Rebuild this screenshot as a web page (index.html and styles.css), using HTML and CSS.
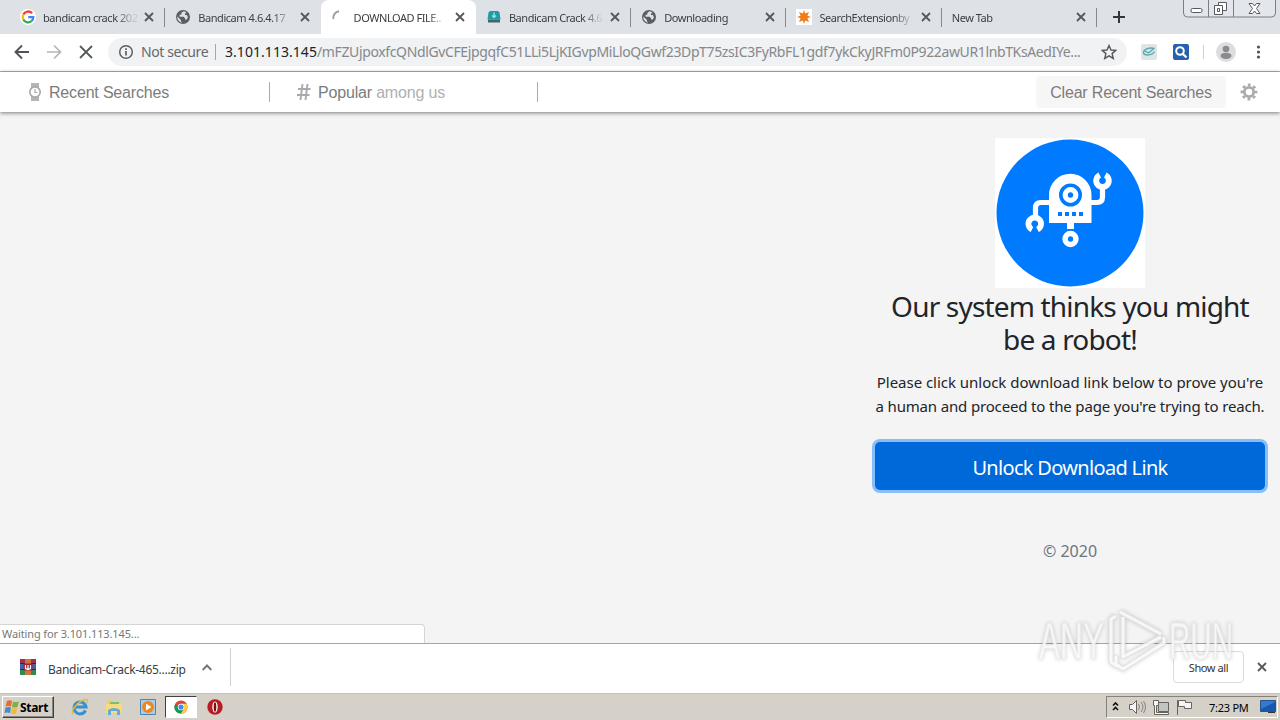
FILE: index.html
```html
<!DOCTYPE html>
<html lang="en">
<head>
    <meta charset="UTF-8">
    <meta name="viewport" content="width=device-width, initial-scale=1.0">
    <title>DOWNLOAD FILE</title>
    <link rel="stylesheet" href="styles.css">
</head>
<body>
    <svg class="defs" width="0" height="0">
        <symbol id="close" viewBox="0 0 10 10"><path d="M1 1l8 8M9 1L1 9" fill="none" stroke="#54575b" stroke-width="1.8"/></symbol>
        <symbol id="globe" viewBox="0 0 16 16"><circle cx="8" cy="8" r="7" fill="#5a5e63"/><path d="M8.5 2.2L6.3 4.1v1.7H4.5v2h4.2l1.4 1.6v1.2h1.7l1.1-2.3-1-2.4H10V4.2h1.6C11 3 9.8 2.3 8.5 2.2zM2.3 7.5l3.6 3.4v1.4l1.2 1.4C4.3 13.200 1.900 10.700 2.300 7.500z" fill="#dee1e6"/></symbol>
    </svg>

    <div class="tabs">
        <div class="tab">
            <svg class="favicon" viewBox="0 0 16 16"><circle cx="8" cy="8" r="8" fill="#fff"/><g fill="none" stroke-width="2.3"><path d="M12.100 4.300A5.300 5.300 0 0 0 3.300 5.600" stroke="#ea4335"/><path d="M3.300 5.600a5.300 5.300 0 0 0 0 4.800" stroke="#fbbc05"/><path d="M3.300 10.400a5.300 5.300 0 0 0 8.300 1.600" stroke="#34a853"/><path d="M11.600 12a5.300 5.300 0 0 0 1.600-3.800H8.200" stroke="#4285f4"/></g></svg>
            <span class="title">bandicam crack 202</span>
            <svg class="close"><use href="#close"/></svg>
        </div>
        <div class="tab">
            <svg class="favicon"><use href="#globe"/></svg>
            <span class="title">Bandicam 4.6.4.17</span>
            <svg class="close"><use href="#close"/></svg>
        </div>
        <div class="tab active">
            <svg class="favicon" viewBox="0 0 16 16"><path d="M2.500 10A6.500 6.500 0 0 1 8 2.200" fill="none" stroke="#9a9da1" stroke-width="1.900"/></svg>
            <span class="title">DOWNLOAD FILE..</span>
            <svg class="close"><use href="#close"/></svg>
        </div>
        <div class="tab">
            <svg class="favicon" viewBox="0 0 16 16"><path d="M4 2h8l1.500 1.500 1 7H1.500l1-7z" fill="#219ba2"/><path d="M2 10.500h12v3H2z" fill="#476370"/><path d="M8 3.500v5M6 6.500l2 2 2-2" stroke="#8be4df" stroke-width="1.500" fill="none"/></svg>
            <span class="title">Bandicam Crack 4.6</span>
            <svg class="close"><use href="#close"/></svg>
        </div>
        <div class="tab">
            <svg class="favicon"><use href="#globe"/></svg>
            <span class="title">Downloading</span>
            <svg class="close"><use href="#close"/></svg>
        </div>
        <div class="tab">
            <svg class="favicon" viewBox="0 0 16 16"><path d="M0 0h16v16H0z" fill="#fff"/><path d="M8 1l1.200 3.600L13 3l-1.600 3.800L15 8l-3.600 1.200L13 13l-3.800-1.600L8 15l-1.200-3.600L3 13l1.600-3.800L1 8l3.600-1.200L3 3l3.800 1.600z" fill="#ef7c19"/></svg>
            <span class="title">SearchExtensionby</span>
            <svg class="close"><use href="#close"/></svg>
        </div>
        <div class="tab">
            <span class="title">New Tab</span>
            <svg class="close"><use href="#close"/></svg>
        </div>
        <svg class="plus" viewBox="0 0 12 12"><path d="M6 0v12M0 6h12" stroke="#33363a" stroke-width="2"/></svg>
        <svg class="windowButtons" viewBox="0 0 96 18"><path d="M.5-1v14q0 4 4 4h84q4 0 4-4V-1M25.500 0v17M50.500 0v17" fill="#e3e6ea" stroke="#7b7e83"/><g fill="#fff" stroke="#55585d"><rect x="8" y="8.500" width="11" height="4" rx="1.500"/><path d="M35.500 2.500h8v8h-8z"/><path d="M31.500 5.500h8v9h-8z"/><path d="M34.500 8.500h2v3h-2z"/><path d="M66 3.500h3.500l2 2.500 2-2.500H77L73.500 8.500 77 13.500h-3.500l-2-2.500-2 2.500H66l3.500-5z"/></g></svg>
    </div>

    <div class="toolbar">
        <svg class="nav" viewBox="0 0 80 16"><path d="M15 8H2M8 1.500L1.500 8 8 14.500" fill="none" stroke="#505357" stroke-width="1.900"/><path d="M33 8h13M40 1.500L46.500 8 40 14.500" fill="none" stroke="#b5b6b8" stroke-width="1.700"/><path d="M66 2l12 12M78 2L66 14" stroke="#55585c" stroke-width="1.800"/></svg>
        <div class="address">
            <svg class="info" viewBox="0 0 16 16"><circle cx="8" cy="8" r="6.300" fill="none" stroke="#5c6065" stroke-width="1.500"/><path d="M8 7v4.500M8 4.300v1.700" stroke="#5c6065" stroke-width="1.700"/></svg>
            <span class="notSecure">Not secure</span>
            <span class="divider"></span>
            <span class="host">3.101.113.145</span><span class="path">/mFZUjpoxfcQNdlGvCFEjpgqfC51LLi5LjKIGvpMiLloQGwf23DpT75zsIC3FyRbFL1gdf7ykCkyJRFm0P922awUR1lnbTKsAedIYe...</span>
            <svg class="star" viewBox="0 0 16 16"><path d="M8 1.500l2 4.500 4.800.4-3.700 3.200 1.200 4.800L8 11.800l-4.300 2.600 1.200-4.800L1.200 6.400 6 6z" fill="none" stroke="#55585c" stroke-width="1.400"/></svg>
        </div>
        <svg class="extensions" viewBox="0 0 130 22"><rect x="1" y="3" width="16" height="16" rx="2" fill="#dfe4e5"/><path d="M14.500 7.500C9 6 3.500 8.500 3.500 11.500s8 4 11-1M5 10l3.500 2 6-5" fill="none" stroke="#55acb2" stroke-width="1.400"/><rect x="33" y="3" width="16" height="16" rx="2" fill="#2660ae"/><circle cx="40" cy="10" r="3.800" fill="none" stroke="#fff" stroke-width="2"/><path d="M43 13l3.500 3.500" stroke="#fff" stroke-width="2.300"/><path d="M63.500 4v14" stroke="#cfd1d4"/><circle cx="86" cy="11" r="10" fill="#dddddf"/><circle cx="86" cy="8" r="3.300" fill="#898b8e"/><ellipse cx="86" cy="14.800" rx="5.500" ry="3.100" fill="#898b8e"/><g fill="#505357"><circle cx="118.500" cy="6" r="1.600"/><circle cx="118.500" cy="11" r="1.600"/><circle cx="118.500" cy="16" r="1.600"/></g></svg>
    </div>

    <div class="searchBar">
        <div class="item recent">
            <svg width="14" height="20" viewBox="0 0 14 20"><path d="M3 1h8v5H3zM3 14h8v5H3z" fill="#b5b5b5"/><circle cx="7" cy="10" r="5.200" fill="#fff" stroke="#aaa" stroke-width="1.700"/><path d="M7 7v3.500h2.500" fill="none" stroke="#aaa" stroke-width="1.200"/></svg>
            <span>Recent Searches</span>
        </div>
        <div class="item popular">
            <svg width="14" height="18" viewBox="0 0 14 18"><path d="M5.500 1l-2 16M10.500 1l-2 16M1 6h12.500M0 12h12.500" stroke="#aaa" stroke-width="1.900"/></svg>
            <span>Popular <em>among us</em></span>
        </div>
        <button class="clear">Clear Recent Searches</button>
        <svg class="gear" viewBox="0 0 18 18"><circle cx="9" cy="9" r="4.700" fill="none" stroke="#aaa" stroke-width="2.800"/><circle cx="9" cy="9" r="7.100" fill="none" stroke="#aaa" stroke-width="2.600" stroke-dasharray="2.800 2.776" stroke-dashoffset="1.400"/></svg>
    </div>

    <div class="page">
        <div class="content">
            <svg class="robot" viewBox="0 0 150 150">
                <path d="M0 0h150v150H0z" fill="#fff"/>
                <circle cx="75" cy="75" r="73.500" fill="#007bff"/>
                <path d="M54 85V57a21.200 21.200 0 0 1 42.500 0v28z" fill="#fff"/>
                <circle cx="75.500" cy="57" r="9.700" fill="#fff" stroke="#007bff" stroke-width="3.600"/>
                <circle cx="75.500" cy="57" r="2.700" fill="#007bff"/>
                <path d="M63 74h4v4h-4zM70 74h4v4h-4zM77 74h4v4h-4zM84 74h4v4h-4z" fill="#007bff"/>
                <path d="M72 85h7v6h-7z" fill="#fff"/>
                <circle cx="75.500" cy="101" r="5.400" fill="none" stroke="#fff" stroke-width="5.500"/>
                <g fill="none" stroke="#fff" stroke-width="5.200">
                    <path d="M55 64.500H46q-5.500 0-5.500 5.500v8M96 64.500h6q5.500 0 5.500-5.500v-8"/>
                    <path d="M37 91.500a6.300 6.300 0 1 1 5.500 0" stroke-width="5.800"/>
                    <path d="M104.700 37a6.300 6.300 0 1 0 5.600 0" stroke-width="5.800"/>
                </g>
            </svg>
            <h1>Our system thinks you might<br>be a robot!</h1>
            <p>Please click unlock download link below to prove you're<br><span class="second">a human and proceed to the page you're trying to reach.</span></p>
            <button class="unlock">Unlock Download Link</button>
            <div class="copyright">© 2020</div>
        </div>
        <div class="status">Waiting for 3.101.113.145...</div>
    </div>

    <div class="downloads">
        <div class="file">
            <svg width="16" height="16" viewBox="0 0 16 16"><path d="M0 0h16v5H0z" fill="#a92d49"/><path d="M0 5h16v5H0z" fill="#3d65b5"/><path d="M0 10h16v6H0z" fill="#34884a"/><path d="M0 4.500h16M0 10.500h16" stroke="#252c3d"/><path d="M5 0h6v16H5z" fill="#cf743c"/><path d="M3.500 4.500h9v7h-9z" fill="#9e243d"/><path d="M5.500 6v3.500l2.500 1 2.500-1V6M8 6v4" fill="none" stroke="#fff" stroke-width="1.200"/></svg>
            <span>Bandicam-Crack-465....zip</span>
            <svg class="chevron" width="10" height="7" viewBox="0 0 10 7"><path d="M.700 6L5 1.500 9.300 6" fill="none" stroke="#777" stroke-width="1.900"/></svg>
        </div>
        <button class="showAll">Show all</button>
        <svg class="closeShelf"><use href="#close"/></svg>
    </div>

    <div class="taskbar">
        <div class="start">
            <svg width="16" height="16" viewBox="0 0 16 16"><path d="M3 2q3-1.500 5 0L7 7.500q-3-1-5.500 0z" fill="#e66c34"/><path d="M9 2.500q3 1 6 0L13.500 8q-3 1-5.500 0z" fill="#7eb344"/><path d="M1.500 8.500q3-1 5.500 0L6 14q-3-1-5.500 0z" fill="#4b8ac9"/><path d="M8 9q3 1 5.500 0L12 14.500q-3 1-5 0z" fill="#efba3a"/></svg>
            <span>Start</span>
        </div>
        <div class="launch"><svg width="18" height="18" viewBox="0 0 18 18"><path d="M14.500 12.500A6 6 0 1 1 15 9H4.500" fill="none" stroke="#3194d1" stroke-width="3"/><path d="M2 16C-1 13 7 3 14.500 1.500c3-.5 2 2.500 1.500 3.500" fill="none" stroke="#e3b93f" stroke-width="1.400"/></svg></div>
        <div class="launch"><svg width="18" height="18" viewBox="0 0 18 18"><path d="M2 2h5l2 2h7v10H2z" fill="#efce67"/><path d="M5 4h9v5H5z" fill="#7bbd74"/><path d="M1 6h16v9H1z" fill="#f4da83"/><path d="M3 17v-5q6-4 12 0v5h-3v-4H6v4z" fill="#67abd4"/></svg></div>
        <div class="launch"><svg width="18" height="18" viewBox="0 0 18 18"><path d="M1.500 1.500h15v15h-15z" fill="#a8cfea" stroke="#4b84b0"/><circle cx="9" cy="9" r="6" fill="#ee8723"/><path d="M7 5.500v7L12.500 9z" fill="#fff"/></svg></div>
        <div class="launch pressed"><svg width="14" height="14" viewBox="0 0 16 16"><circle cx="8" cy="8" r="7.500" fill="#db4437"/><path d="M1.500 4.250A7.500 7.500 0 0 0 8 15.500L11.250 9.900 8 8H4.700z" fill="#0f9d58"/><path d="M14.500 4.250A7.500 7.500 0 0 1 8 15.500l3.250-5.600L8 4.250z" fill="#ffcd40"/><circle cx="8" cy="8" r="3.700" fill="#fff"/><circle cx="8" cy="8" r="2.900" fill="#4285f4"/></svg></div>
        <div class="launch"><svg width="16" height="16" viewBox="0 0 16 16"><circle cx="8" cy="8" r="7.700" fill="#b51d23"/><ellipse cx="8" cy="8" rx="2.700" ry="5.500" fill="#fff"/><ellipse cx="8" cy="8" rx="1.300" ry="4.700" fill="#761116"/></svg></div>
        <div class="tray">
            <svg width="82" height="18" viewBox="0 0 82 18"><path d="M2 7.500L4.500 5 7 7.500M2 12l2.500-2.500L7 12" fill="none" stroke="#111" stroke-width="1.600"/><g fill="#f5f5f5" stroke="#67645f"><path d="M18.500 6.500h3l4-4v13l-4-4h-3z"/><path d="M27.500 6q2 3 0 6M30 4q4 5 0 10M32.500 3q4 6 0 12" fill="none" stroke="#85827c"/><path d="M47.500 4.500h10v9h-10z" fill="#c2c3c3"/><path d="M42.500 2.500h5v5h-2v7h12v2h-14v-9h-1z"/><path d="M66.500 2v15" fill="none"/><path d="M67.500 2.500h7v2h6v6h-7v-2h-6z"/></g></svg>
            <span>7:23 PM</span>
            <svg class="desktop" width="16" height="14" viewBox="0 0 16 14"><path d="M.5.500h15v11H.5z" fill="#3579d3" stroke="#27548f"/><path d="M1 9L15 2v9H1z" fill="#1859ad"/><path d="M8 12.500h7" stroke="#333"/></svg>
        </div>
    </div>

    <!-- badge floating over the bottom right corner -->
    <svg class="watermark" viewBox="0 0 210 74">
        <g class="letters">
            <text x="7" y="53" textLength="65" lengthAdjust="spacingAndGlyphs">ANY</text>
            <text x="137" y="53" textLength="64" lengthAdjust="spacingAndGlyphs">RUN</text>
        </g>
        <path class="outer" d="M84 10l-5 3v43l7 5M88 6l41 22M132 31v6L91 63l-7-5V50M91 11v40l38-20"/>
        <path class="inner" d="M84 10l-5 3v43l7 5M88 6l41 22M132 31v6L91 63l-7-5V50M91 11v40l38-20"/>
    </svg>
</body>
</html>
```
FILE: styles.css
```css
* {
    box-sizing: border-box;
}
body {
    margin: 0;
    width: 1280px;
    height: 720px;
    overflow: hidden;
    display: flex;
    flex-direction: column;
    background-color: #f4f4f4;
    font-family: "Noto Sans", sans-serif;
}
svg {
    display: block;
    flex-shrink: 0;
}
.defs {
    position: absolute;
}
button {
    font-family: inherit;
    padding: 0;
    white-space: nowrap;
}

/* tabs */
.tabs {
    height: 34px;
    flex-shrink: 0;
    display: flex;
    padding-left: 10px;
    background-color: #dee1e6;
}
.tab {
    width: 155.3px;
    display: flex;
    align-items: center;
    padding: 0 11px 0 10px;
    font-size: 11px;
    letter-spacing: -0.45px;
    color: #3c4043;
    background: linear-gradient(#85888d, #85888d) right 8px / 1px 19px no-repeat;
}
.tab:nth-child(2) {
    background: none;
}
.tab.active {
    background: #fff;
    border-radius: 8px 8px 0 0;
}
.favicon {
    width: 16px;
    height: 16px;
    margin-right: 7px;
}
.title {
    flex: 1;
    overflow: hidden;
    white-space: nowrap;
    margin-right: 6px;
    mask-image: linear-gradient(to right, #000 78%, rgba(0, 0, 0, 0.15) 95%);
}
.close {
    width: 10px;
    height: 10px;
}
.plus {
    width: 12px;
    height: 12px;
    margin: 11px 0 0 16px;
}
.windowButtons {
    width: 96px;
    height: 18px;
    margin-left: auto;
    margin-right: 1px;
}

/* toolbar */
.toolbar {
    height: 38px;
    flex-shrink: 0;
    display: flex;
    align-items: center;
    background-color: #fff;
    border-bottom: 1px solid #afafaf;
}
.nav {
    width: 80px;
    height: 16px;
    margin: -2px 0 0 14px;
}
.address {
    width: 1019px;
    height: 28px;
    margin: -1px 0 0 14px;
    padding: 0 10px 1px;
    display: flex;
    align-items: center;
    border-radius: 14px;
    background-color: #f0f2f4;
    font-size: 14px;
    color: #85888c;
    white-space: nowrap;
}
.info {
    width: 16px;
    height: 16px;
}
.notSecure {
    margin-left: 7px;
    width: 67px;
    letter-spacing: -0.4px;
    color: #65686c;
}
.divider {
    width: 1px;
    height: 16px;
    margin: 0 9px 0 7px;
    background-color: #a5a7aa;
}
.host {
    width: 92px;
    letter-spacing: 0.05px;
    color: #202124;
}
.path {
    flex: 1;
    letter-spacing: -0.37px;
}
.star {
    width: 16px;
    height: 16px;
}
.extensions {
    width: 130px;
    height: 22px;
    margin: -1px 0 0 13px;
}

/* search bar */
.searchBar {
    position: relative;
    height: 40px;
    flex-shrink: 0;
    display: flex;
    align-items: center;
    background-color: #fff;
    box-shadow: 0 1px 4px rgba(0, 0, 0, 0.5);
    font-family: "Liberation Sans", sans-serif;
    font-size: 16px;
    letter-spacing: -0.18px;
    color: #7c7c7c;
}
.item {
    height: 20px;
    display: flex;
    align-items: center;
    border-right: 1px solid #aaa;
}
.item span {
    padding-top: 2px;
}
.item em {
    font-style: normal;
    color: #b0b0b0;
}
.recent {
    width: 270px;
    padding-left: 28px;
    gap: 7px;
}
.popular {
    width: 268px;
    padding-left: 27px;
    gap: 7px;
}
.clear {
    width: 190px;
    height: 32px;
    margin-left: auto;
    padding: 1px 0 0;
    border: none;
    border-radius: 4px;
    background-color: #f6f6f6;
    font-size: 16px;
    letter-spacing: -0.18px;
    color: #7c7c7c;
}
.gear {
    width: 18px;
    height: 18px;
    margin: 0 22px 0 14px;
}

/* page */
.page {
    flex: 1;
    display: flex;
    flex-direction: column;
    justify-content: space-between;
}
.content {
    width: 420px;
    align-self: flex-end;
    padding: 26px 15px 0;
    text-align: center;
    color: #212529;
}
.robot {
    width: 150px;
    height: 150px;
    margin: 0 auto;
}
h1 {
    margin: 2px 0 14px;
    font-size: 28px;
    font-weight: 400;
    line-height: 33px;
    letter-spacing: -0.82px;
}
p {
    margin: 0 0 24px;
    font-size: 15px;
    line-height: 24px;
    letter-spacing: -0.03px;
    white-space: nowrap;
}
.second {
    letter-spacing: -0.16px;
}
.unlock {
    width: 390px;
    height: 48px;
    border: none;
    border-radius: 5px;
    background-color: #0069d9;
    box-shadow: 0 0 0 3px #86bdfc;
    font-size: 20px;
    line-height: 30px;
    letter-spacing: -0.68px;
    padding-top: 4px;
    color: #fff;
}
.copyright {
    margin-top: 49px;
    font-size: 16px;
    line-height: 24px;
    color: #6c757d;
}
.status {
    width: 425px;
    height: 19px;
    padding-left: 2px;
    border: 1px solid #d5d5d5;
    border-width: 1px 1px 0 0;
    border-radius: 0 4px 0 0;
    background-color: #fff;
    font-size: 11px;
    line-height: 18px;
    letter-spacing: -0.12px;
    color: #777;
}

/* download shelf */
.downloads {
    height: 50px;
    flex-shrink: 0;
    display: flex;
    align-items: center;
    padding-bottom: 3px;
    border-top: 1px solid #a5a5a5;
    background-color: #fff;
}
.file {
    width: 231px;
    height: 38px;
    padding-left: 20px;
    display: flex;
    align-items: center;
    border-right: 1px solid #d0d0d0;
    font-size: 12px;
    letter-spacing: -0.28px;
    color: #3c4043;
}
.file span {
    width: 138px;
    margin: 4px 16px 0 12px;
    white-space: nowrap;
}
.showAll {
    width: 71px;
    height: 32px;
    margin-left: auto;
    border: 1px solid #dadce0;
    border-radius: 4px;
    background: none;
    font-size: 11px;
    letter-spacing: -0.4px;
    color: #333;
}
.closeShelf {
    width: 10px;
    height: 10px;
    margin: 0 13px;
}

/* taskbar */
.taskbar {
    height: 27px;
    flex-shrink: 0;
    display: flex;
    align-items: center;
    padding: 0 2px;
    border-top: 1px solid #c5c2bc;
    background-color: #d5d0c8;
}
.start {
    width: 52px;
    height: 22px;
    margin-right: 10px;
    display: flex;
    align-items: center;
    padding-left: 1px;
    border: 1px solid;
    border-color: #fff #404040 #404040 #fff;
    box-shadow: inset -1px -1px #898680;
    font-size: 12px;
    font-weight: 700;
    color: #000;
    letter-spacing: -0.3px;
}
.launch {
    width: 32px;
    height: 22px;
    margin-right: 1.8px;
    display: flex;
    align-items: center;
    justify-content: center;
}
.pressed {
    background-color: #fff;
    border: 1px solid;
    border-color: #404040 #fff #fff #404040;
}
.tray {
    width: 172px;
    height: 22px;
    margin-left: auto;
    padding-left: 4px;
    display: flex;
    align-items: center;
    border: 1px solid;
    border-color: #85827c #fff #fff #85827c;
    font-size: 11px;
    letter-spacing: -0.25px;
    color: #000;
}
.tray span {
    width: 41px;
    margin-left: 16px;
    white-space: nowrap;
}
.desktop {
    margin-left: 10px;
}

.watermark {
    position: absolute;
    left: 1032px;
    top: 606px;
    width: 210px;
    height: 74px;
    opacity: 0.85;
    filter: drop-shadow(0 0 2px rgba(0, 0, 0, 0.22));
}
.letters {
    font-family: "Liberation Sans", sans-serif;
    font-size: 52px;
    fill: #f7f7f7;
    stroke: #e8e8e8;
    stroke-width: 1;
}
.outer, .inner {
    fill: none;
    stroke: #ddd;
    stroke-width: 5;
    stroke-linejoin: round;
}
.inner {
    stroke: #f8f8f8;
    stroke-width: 3;
}
```
